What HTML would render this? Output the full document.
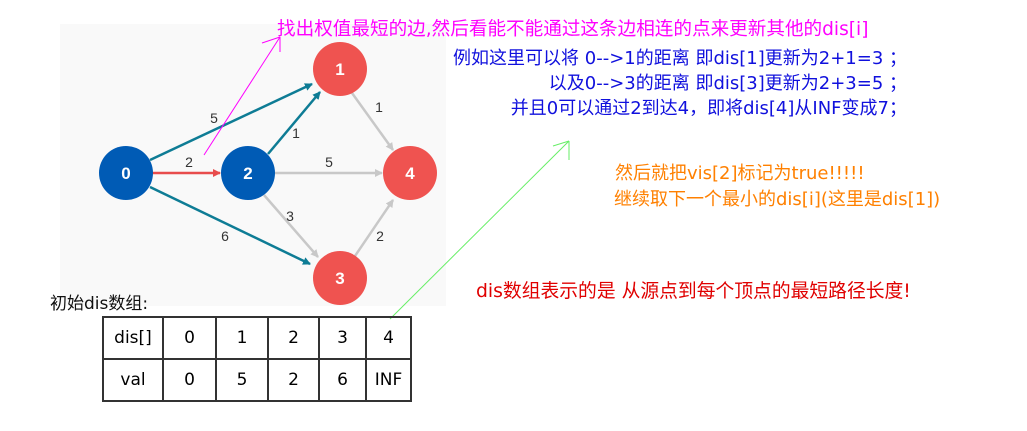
<!DOCTYPE html>
<html><head><meta charset="utf-8"><style>
body{margin:0;width:1027px;height:431px;background:#fff;position:relative;overflow:hidden;font-family:"DejaVu Sans","Noto Sans CJK SC",sans-serif}
.t{position:absolute;white-space:nowrap;font-size:18px}
table{position:absolute;left:102px;top:316px;border-collapse:collapse;font-size:17px;font-family:"DejaVu Sans",sans-serif}
td{border:2px solid #333;text-align:center;height:40px;padding:0}
</style></head><body>
<div style="position:absolute;left:60px;top:24px;width:386px;height:282px;background:#f9f9f9"></div>
<svg width="1027" height="431" style="position:absolute;left:0;top:0">
<defs>
<marker id="mt" markerWidth="8" markerHeight="8" refX="7" refY="4" orient="auto" markerUnits="userSpaceOnUse"><path d="M0,0L8,4L0,8z" fill="#0e7c95"/></marker>
<marker id="mg" markerWidth="8" markerHeight="8" refX="7" refY="4" orient="auto" markerUnits="userSpaceOnUse"><path d="M0,0L8,4L0,8z" fill="#c8c8c8"/></marker>
<marker id="mr" markerWidth="8" markerHeight="8" refX="7" refY="4" orient="auto" markerUnits="userSpaceOnUse"><path d="M0,0L8,4L0,8z" fill="#e84c4c"/></marker>
</defs>
<g stroke-width="2.5" fill="none">
<line x1="150" y1="160" x2="312" y2="84" stroke="#0e7c95" marker-end="url(#mt)"/>
<line x1="268" y1="154" x2="320" y2="92" stroke="#0e7c95" marker-end="url(#mt)"/>
<line x1="150" y1="187" x2="310" y2="264" stroke="#0e7c95" marker-end="url(#mt)"/>
<line x1="152" y1="173" x2="220" y2="173" stroke="#e84c4c" marker-end="url(#mr)"/>
<line x1="274" y1="173" x2="382" y2="173" stroke="#c8c8c8" marker-end="url(#mg)"/>
<line x1="352" y1="93" x2="393" y2="150" stroke="#c8c8c8" marker-end="url(#mg)"/>
<line x1="264" y1="195" x2="318" y2="257" stroke="#c8c8c8" marker-end="url(#mg)"/>
<line x1="355" y1="256" x2="393" y2="200" stroke="#c8c8c8" marker-end="url(#mg)"/>
</g>
<g font-family="Liberation Sans" font-weight="bold" font-size="17" fill="#fff" text-anchor="middle">
<circle cx="126" cy="173" r="27" fill="#005bb5"/><text x="126" y="179">0</text>
<circle cx="248" cy="173" r="27" fill="#005bb5"/><text x="248" y="179">2</text>
<circle cx="340" cy="69" r="27" fill="#ef5350"/><text x="340" y="75">1</text>
<circle cx="410" cy="173" r="27" fill="#ef5350"/><text x="410" y="179">4</text>
<circle cx="340" cy="278" r="27" fill="#ef5350"/><text x="340" y="284">3</text>
</g>
<g font-family="Liberation Sans" font-size="14" fill="#333" text-anchor="middle">
<text x="214" y="123">5</text><text x="189" y="167">2</text><text x="296" y="138">1</text>
<text x="329" y="167">5</text><text x="379" y="112">1</text><text x="290" y="221">3</text>
<text x="225" y="241">6</text><text x="380" y="241">2</text>
</g>
<g stroke="#ff00ff" stroke-width="1" fill="none">
<line x1="204" y1="155" x2="280" y2="37"/><line x1="262" y1="43" x2="280" y2="37"/><line x1="280" y1="52" x2="280" y2="37"/>
</g>
<g stroke="#66ee66" stroke-width="1" fill="none">
<line x1="390" y1="319" x2="569" y2="141"/><line x1="553" y1="146" x2="569" y2="141"/><line x1="569" y1="160" x2="569" y2="141"/>
</g>
</svg>
<div class="t" style="left:277px;top:14px;color:#ff00ff;font-size:18.6px">找出权值最短的边,然后看能不能通过这条边相连的点来更新其他的dis[i]</div>
<div class="t" style="right:120px;top:46px;color:#1010dd;text-align:right;line-height:25px">例如这里可以将 0-->1的距离 即dis[1]更新为2+1=3 ；<br>以及0-->3的距离 即dis[3]更新为2+3=5 ；<br>并且0可以通过2到达4，即将dis[4]从INF变成7；</div>
<div class="t" style="left:615px;top:159px;color:#ff8000">然后就把vis[2]标记为true!!!!!</div>
<div class="t" style="left:614px;top:185px;color:#ff8000">继续取下一个最小的dis[i](这里是dis[1])</div>
<div class="t" style="left:476px;top:276px;color:#e00000;font-size:18.8px">dis数组表示的是 从源点到每个顶点的最短路径长度!</div>
<div class="t" style="left:50px;top:289px;color:#111;font-size:17px">初始dis数组:</div>
<table>
<tr><td style="width:58px">dis[]</td><td style="width:51px">0</td><td style="width:50px">1</td><td style="width:49px">2</td><td style="width:45px">3</td><td style="width:43px">4</td></tr>
<tr><td>val</td><td>0</td><td>5</td><td>2</td><td>6</td><td>INF</td></tr>
</table>
</body></html>
